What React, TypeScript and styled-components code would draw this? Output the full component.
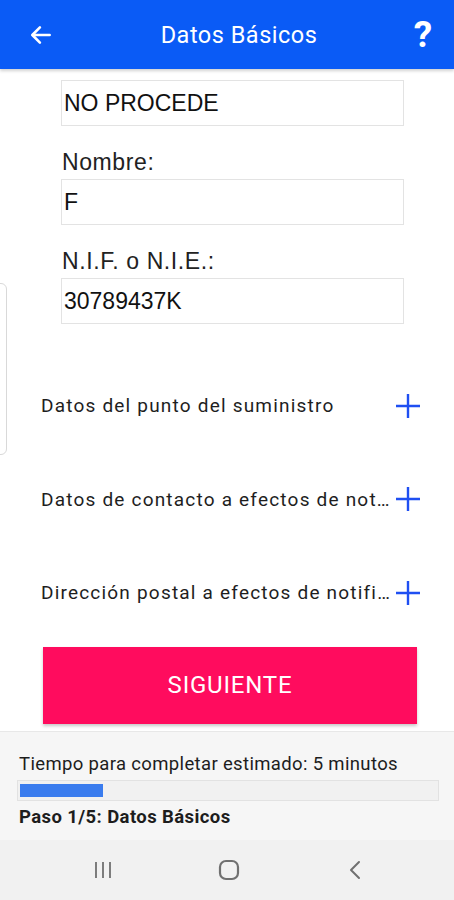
import React, { useState } from 'react';
import styled, { createGlobalStyle } from 'styled-components';

const GlobalStyle = createGlobalStyle`
  html, body {
    margin: 0;
    padding: 0;
    background: #ffffff;
    font-family: Roboto, "Noto Sans", "Liberation Sans", sans-serif;
  }
  * { box-sizing: border-box; }
`;

const Screen = styled.div`
  position: relative;
  width: 454px;
  height: 900px;
  display: flex;
  flex-direction: column;
  overflow: hidden;
  background: #fff;
`;

const Header = styled.header`
  height: 69px;
  flex-shrink: 0;
  display: flex;
  align-items: center;
  justify-content: space-between;
  padding: 0 16px 0 26px;
  background: #0a5bf6;
  color: #fff;
  box-shadow: 0 2px 3px rgba(0, 0, 0, 0.18);
  z-index: 1;
`;

const HeaderTitle = styled.h1`
  margin: 0;
  font-size: 23.5px;
  font-weight: 400;
  letter-spacing: 0.5px;
  padding-left: 14px;
`;

const IconButton = styled.button`
  border: 0;
  background: transparent;
  color: #fff;
  padding: 0;
  display: flex;
  align-items: center;
  justify-content: center;
  width: 30px;
  height: 40px;
  cursor: pointer;
`;

const HelpMark = styled.span`
  font-size: 37px;
  font-weight: 700;
  font-family: Roboto, "Liberation Sans", sans-serif;
  line-height: 1;
`;

const Content = styled.main`
  flex: 1;
  display: flex;
  flex-direction: column;
`;

const Fields = styled.section`
  padding: 11px 50px 0 61px;
  display: flex;
  flex-direction: column;
`;

const Label = styled.label`
  display: block;
  margin: 24px 0 5px 1px;
  font-family: "Liberation Sans", Arial, sans-serif;
  font-size: 23px;
  line-height: 24px;
  color: #222;
  letter-spacing: 0.6px;
`;

const Input = styled.input`
  width: 343px;
  height: 46px;
  border: 1px solid #e3e3e3;
  padding: 0 2px;
  font-family: "Liberation Sans", Arial, sans-serif;
  font-size: 23px;
  color: #111;
  background: #fff;
  outline: none;
`;

const Sections = styled.section`
  margin-top: 35px;
  display: flex;
  flex-direction: column;
`;

const SectionRow = styled.div`
  height: 93.5px;
  display: flex;
  align-items: center;
  padding: 0 33px 0 41px;
  gap: 5px;
`;

const SectionTitle = styled.span`
  flex: 1;
  min-width: 0;
  white-space: nowrap;
  overflow: hidden;
  text-overflow: ellipsis;
  font-size: 19px;
  color: #1e1e1e;
  letter-spacing: 1.2px;
`;

const PlusIcon = styled.svg`
  width: 26px;
  height: 26px;
  flex-shrink: 0;
`;

const NextButton = styled.button`
  margin: 7px 37px 0 43px;
  height: 77px;
  border: 0;
  background: #ff0c5e;
  color: #fff;
  font-family: Roboto, "Liberation Sans", sans-serif;
  font-size: 24px;
  letter-spacing: 0.8px;
  box-shadow: 0 2px 3px rgba(0, 0, 0, 0.22);
  cursor: pointer;
`;

const Footer = styled.footer`
  margin-top: 7px;
  height: 109px;
  background: #f6f6f6;
  border-top: 1px solid #e8e8e8;
  padding: 21px 15px 0 17px;
  color: #1d1d1d;
`;

const FooterText = styled.div<{ $bold?: boolean }>`
  font-size: 18.5px;
  line-height: 22px;
  padding-left: 2px;
  font-weight: ${(p) => (p.$bold ? 700 : 400)};
  letter-spacing: ${(p) => (p.$bold ? '0.4px' : '0.35px')};
`;

const Track = styled.div`
  margin: 5px 0 5px;
  height: 21px;
  border: 1px solid #e2e2e2;
  background: #f1f1f1;
  padding: 3px 2px;
`;

const Fill = styled.div`
  height: 100%;
  background: #3a7cee;
`;

const NavBar = styled.nav`
  height: 60px;
  background: #f1f1f1;
  display: flex;
  align-items: center;
  justify-content: center;
  gap: 100px;
  padding-left: 4px;
`;

const NavIcon = styled.svg`
  width: 26px;
  height: 26px;
  stroke: #707070;
  fill: none;
`;

const SideHandle = styled.div`
  position: absolute;
  left: -10px;
  top: 283px;
  width: 17px;
  height: 172px;
  border: 1px solid #d9d9d9;
  border-radius: 6px;
  background: #fff;
`;

const sections = [
  'Datos del punto del suministro',
  'Datos de contacto a efectos de notificación',
  'Dirección postal a efectos de notificación',
];

export default function App() {
  const [razon, setRazon] = useState('NO PROCEDE');
  const [nombre, setNombre] = useState('F');
  const [nif, setNif] = useState('30789437K');
  const progress = 1 / 5;

  return (
    <>
      <GlobalStyle />
      <Screen>
        <Header>
          <IconButton aria-label="Volver">
            <svg width="26" height="26" viewBox="0 0 24 24" fill="none" stroke="#fff" strokeWidth="2.4" strokeLinecap="round" strokeLinejoin="round">
              <path d="M20 12H4.5" />
              <path d="M11 5l-7 7 7 7" />
            </svg>
          </IconButton>
          <HeaderTitle>Datos Básicos</HeaderTitle>
          <IconButton aria-label="Ayuda">
            <HelpMark>?</HelpMark>
          </IconButton>
        </Header>

        <Content>
          <Fields>
            <Input value={razon} onChange={(e) => setRazon(e.target.value)} />
            <Label>Nombre:</Label>
            <Input value={nombre} onChange={(e) => setNombre(e.target.value)} />
            <Label>N.I.F. o N.I.E.:</Label>
            <Input value={nif} onChange={(e) => setNif(e.target.value)} />
          </Fields>

          <Sections>
            {sections.map((s) => (
              <SectionRow key={s}>
                <SectionTitle>{s}</SectionTitle>
                <PlusIcon viewBox="0 0 26 26" fill="none" stroke="#1f4ff2" strokeWidth="2.4">
                  <path d="M13 1v24M1 13h24" />
                </PlusIcon>
              </SectionRow>
            ))}
          </Sections>

          <NextButton>SIGUIENTE</NextButton>

          <Footer>
            <FooterText>Tiempo para completar estimado: 5 minutos</FooterText>
            <Track>
              <Fill style={{ width: `${progress * 100}%` }} />
            </Track>
            <FooterText $bold>Paso 1/5: Datos Básicos</FooterText>
          </Footer>
        </Content>

        <NavBar>
          <NavIcon viewBox="0 0 26 26" strokeWidth="1.8">
            <path d="M6 5v16M13 5v16M20 5v16" />
          </NavIcon>
          <NavIcon viewBox="0 0 26 26" strokeWidth="2.2">
            <rect x="4" y="4" width="18" height="18" rx="6" />
          </NavIcon>
          <NavIcon viewBox="0 0 26 26" strokeWidth="2" strokeLinecap="round" strokeLinejoin="round">
            <path d="M17 5l-8 8 8 8" />
          </NavIcon>
        </NavBar>

        <SideHandle />
      </Screen>
    </>
  );
}
